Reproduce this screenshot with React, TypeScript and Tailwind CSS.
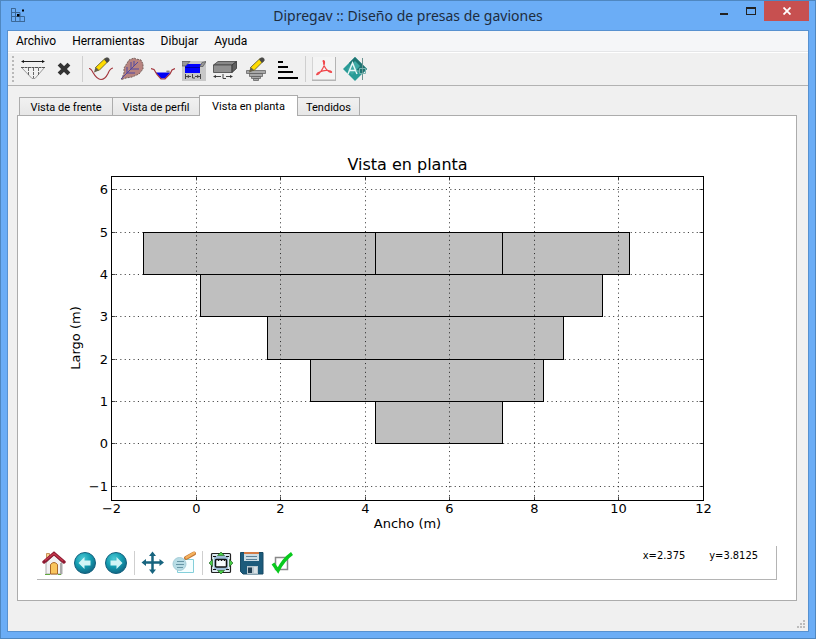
import { useState, type ReactNode } from "react";

const menus = ["Archivo", "Herramientas", "Dibujar", "Ayuda"];

const tabs = [
  { title: "Vista de frente", width: "w-[94px]" },
  { title: "Vista de perfil", width: "w-[88px]" },
  { title: "Vista en planta", width: "w-[99px]" },
  { title: "Tendidos", width: "w-[63px]" },
];

// Gabion blocks in metres: left, right, bottom
const blocks = [
  [4.25, 7.25, 0],
  [2.7, 8.22, 1],
  [1.7, 8.7, 2],
  [0.1, 9.6, 3],
  [-1.25, 4.25, 4],
  [4.25, 7.25, 4],
  [7.25, 10.25, 4],
];

const xTicks = [-2, 0, 2, 4, 6, 8, 10, 12];
const yTicks = [-1, 0, 1, 2, 3, 4, 5, 6];

const plot = { left: 93.5, right: 685.5, top: 60.5, bottom: 384.5 };

const px = (v: number) => Math.round(93 + (v + 2) * 42.2857) + 0.5;
const py = (v: number) => Math.round(327.25 - v * 42.3) + 0.5;
const label = (v: number) => String(v).replace("-", "−");

function PlanChart() {
  return (
    <svg viewBox="0 0 778 430" className="block w-full" fontFamily='"DejaVu Sans", sans-serif' fontSize="13">
      <text x="389.5" y="54" textAnchor="middle" fontSize="16">Vista en planta</text>
      <g fill="#bfbfbf" stroke="#000">
        {blocks.map(([a, b, y]) => (
          <rect key={`${a}-${y}`} x={px(a)} y={py(y + 1)} width={px(b) - px(a)} height={py(y) - py(y + 1)} />
        ))}
      </g>
      <g stroke="#000" strokeOpacity="0.75" strokeDasharray="1.1 3.3">
        {xTicks.slice(1, -1).map((v) => (
          <path key={v} d={`M${px(v)} ${plot.bottom}V${plot.top}`} />
        ))}
        {yTicks.map((v) => (
          <path key={v} d={`M${plot.left} ${py(v)}H${plot.right}`} />
        ))}
      </g>
      <g stroke="#000" strokeOpacity="0.7">
        {xTicks.map((v) => (
          <path key={v} d={`M${px(v)} ${plot.bottom}v-4M${px(v)} ${plot.top}v4`} />
        ))}
        {yTicks.map((v) => (
          <path key={v} d={`M${plot.left} ${py(v)}h4M${plot.right} ${py(v)}h-4`} />
        ))}
      </g>
      <rect x={plot.left} y={plot.top} width={plot.right - plot.left} height={plot.bottom - plot.top} fill="none" stroke="#000" />
      {xTicks.map((v) => (
        <text key={v} x={px(v)} y="397" textAnchor="middle">{label(v)}</text>
      ))}
      {yTicks.map((v) => (
        <text key={v} x="90" y={py(v) + 4} textAnchor="end">{label(v)}</text>
      ))}
      <text x="389.5" y="412" textAnchor="middle">Ancho (m)</text>
      <text transform="translate(62 222) rotate(-90)" textAnchor="middle">Largo (m)</text>
    </svg>
  );
}

function Icon({ children }: { children: ReactNode }) {
  return (
    <svg viewBox="0 0 24 24" className="size-6" fill="none" aria-hidden="true">
      {children}
    </svg>
  );
}

function Pencil() {
  return (
    <g>
      <path d="M6.5 10.5L16 1.5l3.5 2.5L10 13.5z" fill="#ffdc00" stroke="#555220" strokeWidth="0.8" />
      <path d="M15 2.5L17 .5h2l1.500 1.500v1.500L18 6z" fill="#4a4a48" />
      <path d="M6.500 10L5 15.500l5-2z" fill="#666048" />
    </g>
  );
}

const tools: (null | { name: string; icon: ReactNode })[] = [
  {
    name: "Nueva presa",
    icon: (
      <>
        <path d="M1 4.500h22" stroke="#222" />
        <path d="M0 4.500L3 3v3zM24 4.500L21 3v3z" fill="#111" />
        <path d="M.5 10.500L11 21.500h3L23.500 10.500" stroke="#999" />
        <path d="M0 10.500h24" stroke="#555" strokeDasharray="3 .5" />
        <path d="M7.500 11v7M12.500 11v10M17.500 11v7" stroke="#666" strokeDasharray="3 1" />
      </>
    ),
  },
  {
    name: "Cerrar presa",
    icon: <path d="M8.500 8.500l7 7M15.500 8.500l-7 7" stroke="#333" strokeWidth="4" strokeLinecap="square" />,
  },
  null,
  {
    name: "Perfil del terreno",
    icon: (
      <>
        <path d="M0 11.500q2 0 4 4 4 7 8 7t7-6q2-5 5-5.500" stroke="#a3343b" strokeWidth="1.200" />
        <Pencil />
      </>
    ),
  },
  {
    name: "Cuenca",
    icon: (
      <>
        <path d="M1.500 22.500L4 16V11L9 3l5-2 2 1 5 1 2 4v5l-4 5-7 3-6 1z" fill="#b88480" stroke="#75605c" strokeDasharray="2 1" />
        <path d="M1 22L18 5M7 16V10m0 6h8M11 12V5m0 7h8M14 9V4" stroke="#5046a0" />
      </>
    ),
  },
  {
    name: "Nivel de agua",
    icon: (
      <>
        <path d="M4.500 15.500h15l-5.500 6h-4z" fill="#0000f5" />
        <path d="M0 11.500l3 1 3 5 4 4.500h4l5-5 2-4 3-1.500" stroke="#a3343b" strokeWidth="1.200" />
        <path d="M15.500 14h3l-1.500 1.500z" fill="#aaa" stroke="#555" strokeWidth=".6" />
      </>
    ),
  },
  {
    name: "Vertedero",
    icon: (
      <>
        <path d="M0 4h24v20H0z" fill="#c8c8c8" />
        <path d="M5 7h14l-1 2v7H3V9z" fill="#0000ff" />
        <path d="M0 4.500h8L3.500 9H0zM24 4.500l-4 1-2 4h3z" fill="#999" stroke="#555" strokeWidth=".7" />
        <path d="M3 10.500h15" stroke="#0000a0" />
        <path d="M3.500 17v5M18.500 17v5M4 19.500h5M13 19.500h5M10.500 17v4h2.500" stroke="#444" />
        <path d="M4 19.500l3-1.500v3zM18 19.500L15 18v3z" fill="#444" />
      </>
    ),
  },
  {
    name: "Gavión",
    icon: (
      <>
        <path d="M.5 8L5 4.500h18.500L19 8z" fill="#898989" stroke="#444" strokeWidth=".8" />
        <path d="M.5 8H19v7.500H.5z" fill="#919191" stroke="#444" strokeWidth=".8" />
        <path d="M19 8l4.500-3.500v7L19 15.500z" fill="#606060" stroke="#333" strokeWidth=".8" />
        <path d="M1.500 19.500H8M13 19.500h6M10 17v4.500h3" stroke="#444" />
        <path d="M0 19.500l3-1.500v3zM20 19.500L17 18v3z" fill="#333" />
      </>
    ),
  },
  {
    name: "Dibujar gaviones",
    icon: (
      <>
        <g fill="#a8a8a8" stroke="#666" strokeWidth=".8">
          <path d="M2.500 13.500h19v3h-19zM5.500 16.500h13v3h-13zM7.500 19.500h9v2h-9zM9.500 21.500h5v2h-5z" />
        </g>
        <Pencil />
      </>
    ),
  },
  {
    name: "Tendidos",
    icon: <path d="M3 4h5v2H3zM3 9h10v2H3zM3 14h15v2H3zM3 20h20v2H3z" fill="#000" />,
  },
  null,
  {
    name: "Exportar a PDF",
    icon: (
      <>
        <path d="M0 0h24v24H0z" fill="#b4b4b4" />
        <path d="M.5 0h22.500v22.500H.5z" fill="#f4f4f4" />
        <path d="M11.500 5c-1.500-2 1.500-2 1 1-.5 5-3 8-6 11-3 2-2-1 1-2 4-2 8-2 11-1 3 2-1 2-3-.5C13 11 11.500 8 11.500 5z" stroke="#f0484c" strokeWidth="1.200" />
      </>
    ),
  },
  {
    name: "Exportar a DXF",
    icon: (
      <>
        <path d="M12 0l12 12-12 12L0 12z" fill="#2a9b97" />
        <path d="M12 0l12 12-5 5L6 6z" fill="#1e7472" />
        <path d="M4 12L12 4l5 5-8 9z" fill="#3fa9a4" />
        <path d="M5 17L9.500 6 14 17M6.500 13.500h6" stroke="#e6f6f5" strokeWidth="1.500" />
        <path d="M19.500 1v22" stroke="#6b9491" />
        <path d="M16.500 11.500h6v5h-6zM13 14h3" stroke="#7bb5b2" />
      </>
    ),
  },
];

const arrow = "M5.500 12l6-6v3.500h6v5h-6V18z";

const plotTools: (null | { name: string; icon: ReactNode })[] = [
  {
    name: "Inicio",
    icon: (
      <>
        <path d="M4.500 2.500h3v8h-3z" fill="#fbd691" stroke="#c8935d" />
        <path d="M4 12l8-8 8 8v11H4z" fill="#f2f1f3" stroke="#aaa" />
        <path d="M18 12h2v11h-2z" fill="#aaa" />
        <path d="M2 11L12 2.500 22 11" stroke="#8d1931" strokeWidth="3.400" strokeLinecap="round" />
        <path d="M3 9.500L12 2.500l9 7.500" stroke="#c93a4e" strokeWidth="1.200" />
        <path d="M8.500 23v-9.500q3.500-4 7 0V23z" fill="#f9c55e" stroke="#a9682a" />
        <path d="M3 23.500h5M16 23.500h3" stroke="#61a83d" />
      </>
    ),
  },
  {
    name: "Atrás",
    icon: (
      <>
        <circle cx="12" cy="12" r="10.500" fill="url(#ball)" stroke="#15617e" />
        <path d={arrow} fill="#d2f5f6" />
      </>
    ),
  },
  {
    name: "Adelante",
    icon: (
      <>
        <circle cx="12" cy="12" r="10.500" fill="url(#ball)" stroke="#15617e" />
        <path d={arrow} fill="#d2f5f6" transform="rotate(180 12 12)" />
      </>
    ),
  },
  null,
  {
    name: "Desplazar",
    icon: (
      <>
        <path d="M11.500 3v18M3 11.500h18" stroke="#17647f" strokeWidth="2.500" />
        <path d="M11.500 .5L8 5h7zM11.500 23L8 18.500h7zM.5 11.500L5 8v7zM23 11.500L18.500 8v7z" fill="#17647f" />
      </>
    ),
  },
  {
    name: "Ampliar",
    icon: (
      <>
        <path d="M5.500 8.500h16v13h-16z" fill="#f4feff" stroke="#84cfda" />
        <path d="M14 7l8-4.500" stroke="#c17837" strokeWidth="4" strokeLinecap="round" />
        <path d="M14.500 6.500L22 2" stroke="#f5b15d" strokeWidth="2.500" strokeLinecap="round" />
        <circle cx="7.500" cy="13" r="6.500" fill="#b7dce5" stroke="#a5cdd8" />
        <path d="M5 10.500h7M4 13.500h8M5 16.500h6" stroke="#6695a5" />
      </>
    ),
  },
  null,
  {
    name: "Configurar subgráficos",
    icon: (
      <>
        <rect x="2.500" y="2.500" width="19" height="19" rx="1" fill="#dceaf1" stroke="#222" strokeWidth="1.200" />
        <path d="M5 5h14v14H5z" fill="#9dbdd6" />
        <rect x="6.500" y="8.500" width="11" height="7.500" rx="1" fill="#f6fafc" stroke="#111" strokeWidth="1.500" />
        <path d="M9.500 8v2M12.500 8v2M15.500 8v2M4 5.500h3M17 5.500h3M4 18.500h3M17 18.500h3" stroke="#111" />
        <path d="M12 1L8.500 4.500h7zM12 23l-3.500-3.500h7zM0 12l3.500-3.500v7zM24 12l-3.500-3.500v7z" fill="#48cd45" stroke="#155619" strokeWidth=".6" />
      </>
    ),
  },
  {
    name: "Guardar",
    icon: (
      <>
        <path d="M1 1.500h22v21.500H3L.5 20.500V1.500z" fill="#1c5b7b" stroke="#184b65" />
        <path d="M4 1h15v9H4z" fill="#cbdce4" />
        <path d="M4 1h15v2H4z" fill="#d47b45" />
        <path d="M6 5.500h11M6 8.500h11" stroke="#5d8095" />
        <path d="M7 15h11v8H7z" fill="#b8c8cf" />
        <path d="M8 16.500h4V22H8z" fill="#224054" />
        <path d="M14 16h3v6h-3z" fill="#d9e2e6" />
      </>
    ),
  },
  {
    name: "Editar opciones",
    icon: (
      <>
        <path d="M4.500 6.500h12v12h-12z" fill="#fff" stroke="#888" strokeWidth="1.500" />
        <path d="M2 12.500l5 7Q12 9 21 2.500" stroke="#08c91c" strokeWidth="3.400" />
      </>
    ),
  },
];

function ToolButtons({ items }: { items: typeof tools }) {
  return items.map((t, i) =>
    t ? (
      <button key={t.name} type="button" title={t.name} aria-label={t.name} className="shrink-0">
        <Icon>{t.icon}</Icon>
      </button>
    ) : (
      <span key={i} className="-mx-px w-px shrink-0 self-stretch bg-[#cfcfcf]" />
    ),
  );
}

export default function App() {
  const [active, setActive] = useState(2);

  return (
    <div className="flex min-h-screen flex-col border border-[#4f87c0] bg-[#6badf6] px-1.5 pb-1.5 font-['Noto_Sans',sans-serif] text-xs text-black">
      <header className="flex h-[29px] items-start">
        <svg viewBox="0 0 14 14" className="mt-[7px] ml-1 size-3.5 shrink-0" aria-hidden="true">
          <path d="M.5 0v13.500H14M.5.5h4v13M0 4.500h9v9M0 8.500h13.500v5M4.500 4.500v4" fill="none" stroke="#3c6897" />
          <path d="M6 6h2.500v2.500H6zM11 1.500h2v2h-2z" fill="#000" />
        </svg>
        <h1 className="flex-1 pl-20 text-center text-sm leading-[30px] text-[#1e2c3d]">Dipregav :: Diseño de presas de gaviones</h1>
        <div className="flex h-5">
          <button type="button" aria-label="Minimizar" className="flex w-[26px] items-center justify-center">
            <svg viewBox="0 0 8 8" className="size-2"><path d="M0 6h8v2H0z" fill="#222" /></svg>
          </button>
          <button type="button" aria-label="Maximizar" className="flex w-[27px] items-center justify-center">
            <svg viewBox="0 0 10 8" className="h-2 w-2.5"><path d="M0 0h10v8H0zM1 2v5h8V2z" fill="#222" fillRule="evenodd" /></svg>
          </button>
          <button type="button" aria-label="Cerrar" className="flex w-[45px] items-center justify-center bg-[#c75050]">
            <svg viewBox="0 0 8 8" className="size-2"><path d="M.5.5l7 7M7.500.5l-7 7" stroke="#fff" strokeWidth="1.800" /></svg>
          </button>
        </div>
      </header>

      <div className="relative flex flex-1 flex-col border border-[#5791d0] bg-[#f0f0f0]">
        <nav className="flex h-[21px] items-center gap-4 border-b border-[#e5e6e8] bg-[#f5f6f8] px-2 font-[Roboto,sans-serif]">
          {menus.map((m) => (
            <button key={m} type="button">{m}</button>
          ))}
        </nav>

        <div className="flex items-center gap-[7px] border-t border-b border-t-white border-b-[#b2b2b2] py-[3px] pl-[3px]">
          <svg viewBox="0 0 3 26" className="h-[26px] w-[3px] shrink-0" aria-hidden="true">
            <path d="M2 0v26" stroke="#b9b9b9" strokeWidth="2" strokeDasharray="2 2" />
          </svg>
          <ToolButtons items={tools} />
        </div>

        <main className="flex flex-1 flex-col pt-[9px] pr-[11px] pb-[30px] pl-[9px]">
          <div role="tablist" className="relative flex items-end pl-0.5">
            {tabs.map((t, i) => (
              <button
                key={t.title}
                type="button"
                role="tab"
                aria-selected={active === i}
                onClick={() => setActive(i)}
                className={`${t.width} -mr-px shrink-0 border border-b-0 border-[#acacac] pt-0.5 font-[Roboto,sans-serif] text-[11px] leading-4 whitespace-nowrap ${
                  active === i ? "z-10 -mb-px h-[21px] bg-white" : "h-[18px] bg-linear-to-b from-[#f1f1f1] to-[#e7e7e7]"
                }`}
              >
                {t.title}
              </button>
            ))}
          </div>

          <section className="flex flex-1 flex-col border border-[#acacac] bg-white pb-5">
            <PlanChart />
            <div className="mx-[19px] mt-auto flex h-[34px] items-start justify-between border-r border-b border-[#b4b4b4] pl-[5px]">
              <svg className="absolute size-0" aria-hidden="true">
                <radialGradient id="ball" cx=".4" cy=".3" r=".7">
                  <stop offset="0" stopColor="#4cc9d4" />
                  <stop offset=".55" stopColor="#139cb0" />
                  <stop offset="1" stopColor="#126986" />
                </radialGradient>
              </svg>
              <div className="flex gap-[7px] pt-[5px]">
                <ToolButtons items={plotTools} />
              </div>
              <output className="flex gap-6 pr-[18px] font-['DejaVu_Sans_Condensed','DejaVu_Sans',sans-serif] text-[11px] leading-5">
                <span>x=2.375</span>
                <span>y=3.8125</span>
              </output>
            </div>
          </section>
        </main>

        <svg viewBox="0 0 8 8" className="absolute right-[3px] bottom-[3px] size-2" fill="#bcbcbc" aria-hidden="true">
          <path d="M6 0h2v2H6zM3 3h2v2H3zM6 3h2v2H6zM0 6h2v2H0zM3 6h2v2H3zM6 6h2v2H6z" />
        </svg>
      </div>
    </div>
  );
}
